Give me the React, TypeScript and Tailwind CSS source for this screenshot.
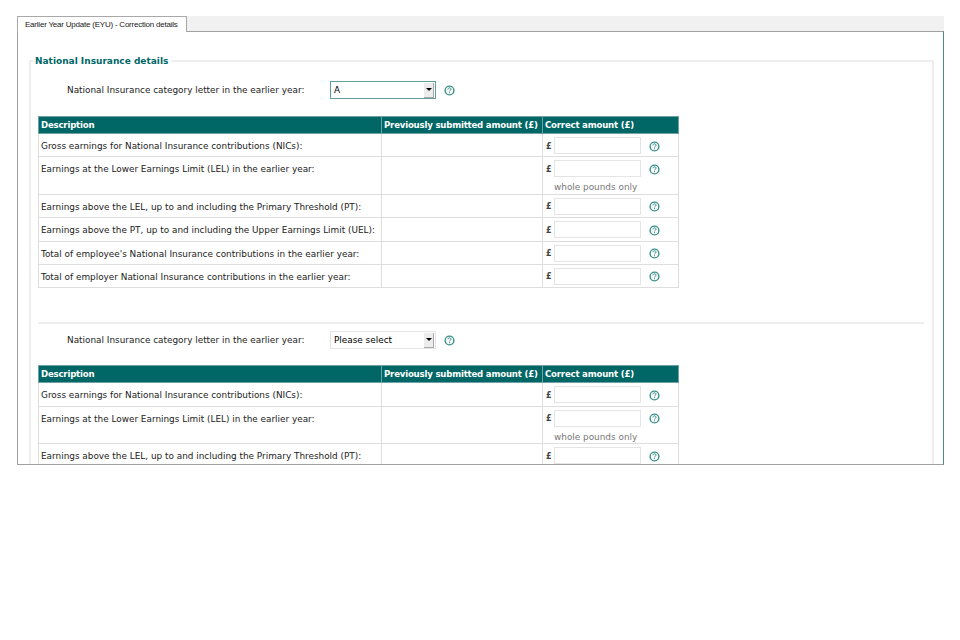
import React from 'react';

const HelpIcon = () => (
  <svg width="11" height="11" viewBox="0 0 11 11" className="shrink-0">
    <circle cx="5.5" cy="5.5" r="4.4" fill="#fff" stroke="#3a8f8a" strokeWidth="1.4" />
    <path d="M4 4.3c0-2 3-2 3 0 0 1-1.500 1-1.500 2.100" fill="none" stroke="#2f8580" strokeWidth="1" />
    <rect x="5" y="7.200" width="1" height="1" fill="#2f8580" />
  </svg>
);

const rows = [
  { label: 'Gross earnings for National Insurance contributions (NICs):' },
  { label: 'Earnings at the Lower Earnings Limit (LEL) in the earlier year:', note: true },
  { label: 'Earnings above the LEL, up to and including the Primary Threshold (PT):' },
  { label: 'Earnings above the PT, up to and including the Upper Earnings Limit (UEL):' },
  { label: "Total of employee's National Insurance contributions in the earlier year:" },
  { label: 'Total of employer National Insurance contributions in the earlier year:' },
];

const CategorySelect = ({ value, active }: { value: string; active?: boolean }) => (
  <div className="flex items-center pl-[29px]">
    <div className="w-[263px] text-[#222]">National Insurance category letter in the earlier year:</div>
    <div
      className={`flex h-[18px] w-[106px] items-center justify-between border pl-[3px] pr-px ${
        active ? 'border-[#5f9f9b]' : 'border-[#e4e4e4]'
      }`}
    >
      <span>{value}</span>
      <div className="flex h-[15px] w-[10px] items-center justify-center border-b border-r border-[#aaa] bg-[#ececec]">
        <div className="h-0 w-0 border-x-[3px] border-t-[3px] border-x-transparent border-t-black" />
      </div>
    </div>
    <div className="ml-[8px]">
      <HelpIcon />
    </div>
  </div>
);

const AmountTable = ({ rowList }: { rowList: typeof rows }) => (
  <table className="w-[640px] table-fixed border-collapse">
    <colgroup>
      <col className="w-[343px]" />
      <col className="w-[161px]" />
      <col className="w-[136px]" />
    </colgroup>
    <thead>
      <tr className="h-[17px] bg-[#006666] font-bold text-white">
        <th className="border border-[#6fa3a3] pl-[2px] text-left text-[8.6px] font-bold tracking-[-0.2px]">
          Description
        </th>
        <th className="border border-[#6fa3a3] pl-[2px] text-left text-[8.6px] font-bold tracking-[-0.2px] whitespace-nowrap">
          Previously submitted amount (£)
        </th>
        <th className="border border-[#6fa3a3] pl-[2px] text-left text-[8.6px] font-bold tracking-[-0.2px]">
          Correct amount (£)
        </th>
      </tr>
    </thead>
    <tbody>
      {rowList.map((row) => (
        <tr key={row.label}>
          <td className="border border-[#dedede] pl-[2px] pt-[6px] align-top text-[#222] whitespace-nowrap">
            {row.label}
          </td>
          <td className="border border-[#dedede]" />
          <td className="border border-[#dedede] px-[3px] pb-[2.4px] pt-[3px] align-top">
            <div className="flex h-[17px] items-center">
              <span className="mt-[2px] w-[8px] text-[8px] font-bold text-[#444]">£</span>
              <div className="h-[17px] w-[87px] border border-[#e4e4e4] bg-white" />
              <div className="ml-[8px] mt-px">
                <HelpIcon />
              </div>
            </div>
            {row.note && <div className="h-[14px] pl-[8px] pt-[4px] text-[#777]">whole pounds only</div>}
          </td>
        </tr>
      ))}
    </tbody>
  </table>
);

export default function App() {
  return (
    <div className="h-[640px] w-[960px] bg-white pl-[17px] pt-4 font-['DejaVu_Sans','Liberation_Sans',sans-serif] text-[8.9px] leading-[12px]">
      <div className="w-[927px]">
        <div className="flex h-[15px] items-end bg-[#f1f1f1]">
          <div className="z-10 -mb-px flex h-[16px] w-[170px] items-center border-x border-t border-[#a9a9a9] bg-white pl-[7px] font-['Liberation_Sans',sans-serif] text-[8px] tracking-[-0.22px] whitespace-nowrap text-[#222]">
            Earlier Year Update (EYU) - Correction details
          </div>
        </div>
        <div className="h-[434px] overflow-hidden border-x border-b border-t border-[#a0a0a0] border-r-[#4d8a86] bg-white pl-[11px] pr-[9px] pt-[28px]">
          <div className="relative h-[500px] w-[905px] border-l-2 border-r-2 border-t-2 border-[#eeeeee] pl-[7px] pr-[8px] pt-[19px]">
            <div className="absolute -top-[7px] left-[2px] bg-white pl-[2px] pr-[4px] text-[9px] font-bold text-[#006666]">
              National Insurance details
            </div>
            <CategorySelect value="A" active />
            <div className="mt-[17px]">
              <AmountTable rowList={rows} />
            </div>
            <div className="mt-[34px] border-t-2 border-[#eeeeee] pt-[7px]">
              <CategorySelect value="Please select" />
            </div>
            <div className="mt-[16px]">
              <AmountTable rowList={rows} />
            </div>
          </div>
        </div>
      </div>
    </div>
  );
}
